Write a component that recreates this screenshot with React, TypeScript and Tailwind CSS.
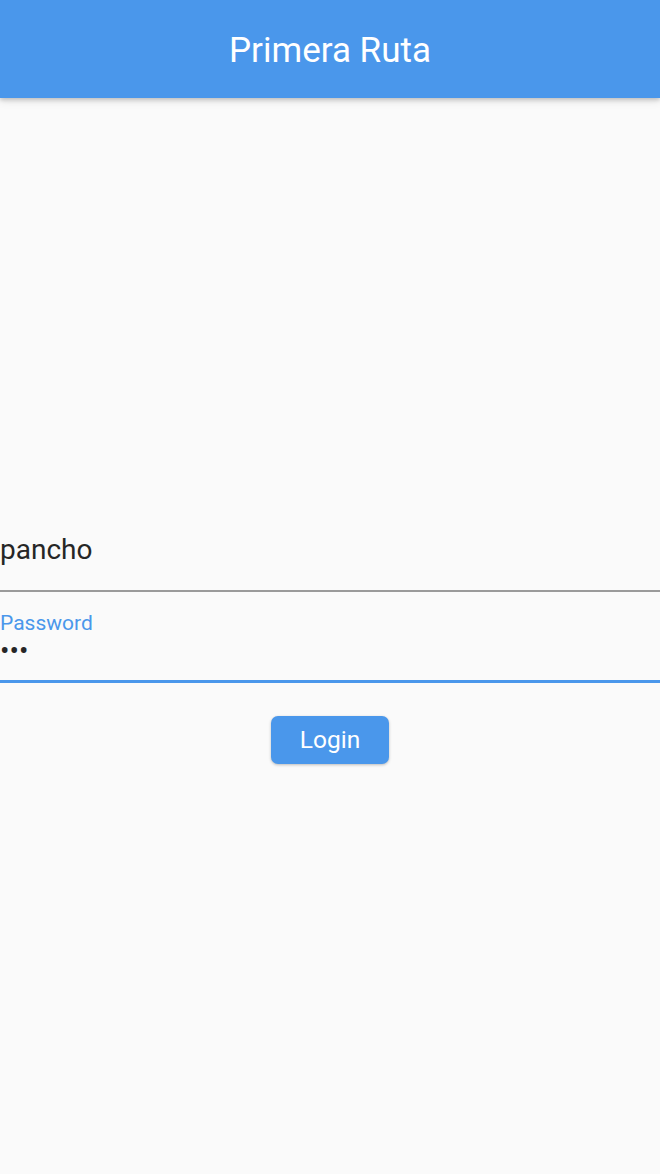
export default function App() {
  return (
    <div className="min-h-[1174px] bg-[#fafafa] flex flex-col" style={{ fontFamily: 'Roboto, "Liberation Sans", sans-serif' }}>
      {/* App bar */}
      <header className="relative z-10 h-[98px] bg-[#4a97eb] flex items-center justify-center pt-[3px] shadow-[0_2px_4px_rgba(0,0,0,0.18),0_4px_8px_rgba(0,0,0,0.08)]">
        <h1 className="text-[35px] leading-[41px] font-normal text-white">Primera Ruta</h1>
      </header>

      <main className="flex flex-col pt-[423px]">
        {/* Username field */}
        <div className="pt-[12px] pb-[24px] border-b-2 border-[#9a9a9a]">
          <div className="text-[28px] leading-[33px] text-[#262626]">pancho</div>
        </div>

        {/* Password field (focused) */}
        <div className="pt-[20px] pb-[13px] border-b-[3.5px] border-[#4a97eb]">
          <div className="text-[21px] leading-[22px] text-[#4a97eb]">Password</div>
          <div className="text-[28px] leading-[33px] text-[#262626]">•••</div>
        </div>

        <div className="flex justify-center pt-[33px]">
          <button className="w-[118px] h-[48px] rounded-[7px] bg-[#4a97eb] text-white text-[24.5px] leading-none shadow-[0_1px_3px_rgba(0,0,0,0.25)]">
            Login
          </button>
        </div>
      </main>
    </div>
  );
}
